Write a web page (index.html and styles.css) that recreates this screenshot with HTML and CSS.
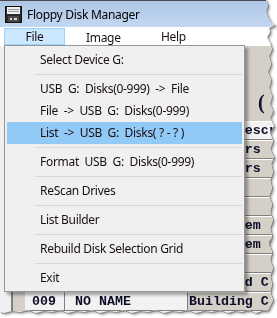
FILE: index.html
```html
<!DOCTYPE html>
<html>
  <head>
    <title>Floppy Disk Manager</title>
    <link rel="stylesheet" href="styles.css">
  </head>
  <body>
    <div id="torn">
      <main id="window">
        <header id="titlebar">
          <svg class="floppy" width="17" height="17" viewBox="0 0 17 17">
            <rect x="0.5" y="0.5" width="16" height="16" fill="#2a2a2a" stroke="#111"/>
            <rect x="2" y="1" width="13" height="7" fill="#f2f2f2"/>
            <rect x="3" y="3" width="11" height="1" fill="#9a9a9a"/>
            <rect x="3" y="5" width="11" height="1" fill="#9a9a9a"/>
            <rect x="3" y="10" width="11" height="6" fill="#4a4a4a"/>
            <rect x="5" y="12" width="2" height="2" fill="#d8d8d8"/>
            <rect x="9" y="12" width="3" height="2" fill="#d8d8d8"/>
          </svg>
          <span class="title">Floppy Disk Manager</span>
        </header>

        <nav id="menubar">
          <span class="menu file active">File</span>
          <span class="menu image">Image</span>
          <span class="menu help">Help</span>
        </nav>

        <section id="content">
          <div class="caption"><span class="paren">(</span></div>
          <div class="grid">
            <span class="rh"></span><span class="cell light"></span><span class="cell light"></span><span class="cell light">      Description</span>
            <span class="rh"></span><span class="cell"></span><span class="cell"></span><span class="cell">Computers</span>
            <span class="rh"></span><span class="cell"></span><span class="cell"></span><span class="cell">Compilers</span>
            <span class="rh"></span><span class="cell"></span><span class="cell"></span><span class="cell"></span>
            <span class="rh"></span><span class="cell"></span><span class="cell"></span><span class="cell"></span>
            <span class="rh"></span><span class="cell"></span><span class="cell"></span><span class="cell">Subsystem</span>
            <span class="rh"></span><span class="cell"></span><span class="cell"></span><span class="cell">Subsystem C</span>
            <span class="rh"></span><span class="cell"></span><span class="cell"></span><span class="cell"></span>
            <span class="rh"></span><span class="cell"></span><span class="cell"></span><span class="cell">Reserved C</span>
            <span class="rh"></span><span class="cell light num">009</span><span class="cell light name">NO NAME</span><span class="cell">Building C</span>
          </div>
        </section>

        <ul id="dropdown">
          <li class="item">Select Device G:</li>
          <li class="sep"></li>
          <li class="item">USB  G:  Disks(0-999)  -&gt;  File</li>
          <li class="item">File  -&gt;  USB  G:  Disks(0-999)</li>
          <li class="item hot">List  -&gt;  USB  G:  Disks( ? - ? )</li>
          <li class="sep"></li>
          <li class="item">Format  USB  G:  Disks(0-999)</li>
          <li class="sep"></li>
          <li class="item">ReScan Drives</li>
          <li class="sep"></li>
          <li class="item">List Builder</li>
          <li class="sep"></li>
          <li class="item">Rebuild Disk Selection Grid</li>
          <li class="sep"></li>
          <li class="item">Exit</li>
        </ul>
      </main>
    </div>
  </body>
</html>
```

FILE: styles.css
```css
body
{
  margin: 0;
  background: #fff;
  font-family: "Noto Sans", sans-serif;
  font-size: 12px;
  letter-spacing: -0.3px;
  color: #1a1010;
}

#torn
{
  width: 277px;
  height: 318px;
  filter: drop-shadow(1px 1px 0 #8a8a8a) drop-shadow(1px 1px 1px rgba(0,0,0,.35));
}

#window
{
  position: relative;
  width: 277px;
  height: 318px;
  display: flex;
  flex-direction: column;
  background: #f0f0f0;
  clip-path: polygon(0 0, 266px 0, 268px 5px, 266px 11px, 268px 17px, 271px 22px, 275px 25px, 269px 28px, 270px 32px, 267px 37px,
    270px 43px, 272px 49px, 269px 56px, 271px 64px, 268px 72px, 271px 80px, 269px 88px, 272px 96px, 270px 104px, 273px 111px,
    270px 118px, 274px 126px, 270px 133px, 273px 141px, 270px 149px, 274px 157px, 271px 164px, 273px 172px, 270px 180px,
    272px 188px, 269px 196px, 272px 204px, 270px 212px, 273px 220px, 270px 228px, 272px 236px, 269px 244px, 272px 252px,
    270px 260px, 273px 268px, 270px 276px, 272px 284px, 270px 292px, 273px 300px, 270px 306px, 268px 310px,
    262px 311px, 256px 313px, 249px 310px, 242px 312px, 235px 311px, 228px 313px, 220px 310px, 212px 312px, 204px 311px,
    196px 313px, 188px 310px, 180px 312px, 172px 311px, 164px 313px, 156px 310px, 148px 312px, 140px 311px, 132px 313px,
    124px 310px, 116px 312px, 108px 311px, 100px 313px, 92px 310px, 84px 312px, 76px 311px, 68px 313px, 60px 310px,
    52px 312px, 44px 311px, 36px 313px, 28px 310px, 20px 312px, 12px 311px, 4px 313px, 0 312px);
}

#titlebar
{
  height: 26px;
  display: flex;
  align-items: center;
  gap: 5px;
  padding-left: 5px;
  border-top: 1px solid #4a4a4a;
  background: linear-gradient(#aec7e6, #c3d8f1);
}

.title { font-size: 12px; color: #000; }

#menubar
{
  height: 19px;
  display: flex;
  align-items: center;
  padding-left: 4px;
  background: #fff;
}

.menu  { height: 15px; line-height: 15px; border: 1px solid transparent; }
.file  { width: 59px; text-align: center; }
.image { width: 95px; padding-left: 20px; box-sizing: border-box; }

.active
{
  background: #cce8ff;
  border-color: #99d1ff;
}

#content
{
  flex: 1;
  padding-left: 11px;
}

.caption
{
  height: 75px;
  background: #d4d0c8;
  border-left: 2px solid #808080;
  box-sizing: border-box;
  padding: 45px 0 0 245px;
  font-family: "Liberation Serif", serif;
  font-weight: bold;
  font-size: 20px;
  color: #101030;
}

.grid
{
  display: grid;
  grid-template-columns: 12px 40px 123px 100px;
  grid-auto-rows: 19px;
  background: #d4d0c8;
  border-left: 2px solid #808080;
  font-family: "Liberation Mono", monospace;
  font-weight: bold;
  font-size: 13.3px;
  letter-spacing: 0;
  color: #0c0c28;
  white-space: pre;
}

.rh { background: #d4d0c8; }

.cell
{
  line-height: 17px;
  padding-left: 1px;
  background: #d4d0c8;
  border-right: 1px solid #808080;
  border-bottom: 1px solid #808080;
  border-top: 1px solid #fff;
  box-sizing: border-box;
  overflow: hidden;
}

.light { background: #f2f2f2; }
.num   { padding-left: 7px; }
.name  { padding-left: 10px; }

#dropdown
{
  position: absolute;
  left: 4px;
  top: 45px;
  width: 235px;
  margin: 0;
  padding: 3px 2px 2px 2px;
  list-style: none;
  background: #f0f0f0;
  border: 1px solid #979797;
  box-shadow: 3px 3px 3px rgba(0,0,0,.35);
}

.item
{
  height: 22px;
  line-height: 22px;
  padding-left: 33px;
  white-space: pre;
}

.hot { background: #91c9f7; }

.sep
{
  height: 1px;
  margin: 3px 0 3px 28px;
  background: #d7d7d7;
}
```
